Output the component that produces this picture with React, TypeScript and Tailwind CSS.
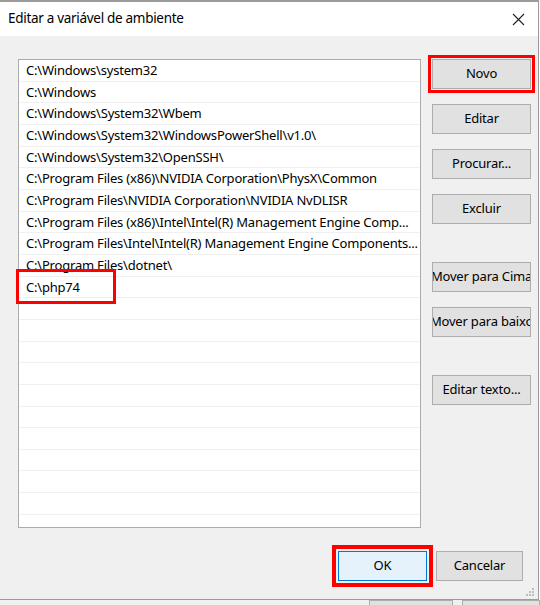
const paths = [
  'C:\\Windows\\system32',
  'C:\\Windows',
  'C:\\Windows\\System32\\Wbem',
  'C:\\Windows\\System32\\WindowsPowerShell\\v1.0\\',
  'C:\\Windows\\System32\\OpenSSH\\',
  'C:\\Program Files (x86)\\NVIDIA Corporation\\PhysX\\Common',
  'C:\\Program Files\\NVIDIA Corporation\\NVIDIA NvDLISR',
  'C:\\Program Files (x86)\\Intel\\Intel(R) Management Engine Comp...',
  'C:\\Program Files\\Intel\\Intel(R) Management Engine Components...',
  'C:\\Program Files\\dotnet\\',
  'C:\\php74',
]

function SideButton({ label, className = '' }: { label: string; className?: string }) {
  return (
    <button
      className={`w-[99px] h-[30px] bg-[#e1e1e1] border border-[#adadad] text-[13px] tracking-[-0.2px] text-black flex items-center justify-center overflow-hidden whitespace-nowrap ${className}`}
    >
      {label}
    </button>
  )
}

export default function App() {
  const rows = [...paths, ...Array(11).fill('')]

  return (
    <div className="relative w-[540px] h-[605px] bg-white overflow-hidden font-['Noto_Sans',sans-serif] text-black">
      {/* janela */}
      <div className="flex flex-col w-[539px] h-[600px] border-t-2 border-r border-b border-[#9b9b9b] bg-[#f0f0f0]">
        <div className="h-[34px] bg-white flex items-center justify-between pl-2 pr-[13px]">
          <span className="text-[13.5px] tracking-[-0.3px] leading-none pb-[1px]">Editar a variável de ambiente</span>
          <svg width="13" height="13" viewBox="0 0 13 13" className="mt-[1px]">
            <path d="M1 1 L12 12 M12 1 L1 12" stroke="#222" strokeWidth="1.1" />
          </svg>
        </div>

        <div className="relative flex-1 flex flex-col">
          <div className="flex pt-[23px] pl-[18px]">
            <div className="w-[403px] h-[469px] bg-white border border-[#acacac] overflow-hidden">
              {rows.map((p, i) => (
                <div
                  key={i}
                  className="h-[21.67px] border-b border-[#f0f0f0] flex items-center pl-[7px] pt-[1px] text-[13px] tracking-[-0.2px] whitespace-nowrap overflow-hidden"
                >
                  {p}
                </div>
              ))}
            </div>

            <div className="ml-[11px] flex flex-col">
              <SideButton label="Novo" className="outline-3 outline-[#ff0000] outline-offset-1" />
              <SideButton label="Editar" className="mt-[15px]" />
              <SideButton label="Procurar..." className="mt-[15px]" />
              <SideButton label="Excluir" className="mt-[15px]" />
              <SideButton label="Mover para Cima" className="mt-[38px]" />
              <SideButton label="Mover para baixo" className="mt-[15px]" />
              <SideButton label="Editar texto..." className="mt-[38px]" />
            </div>
          </div>

          <div className="flex justify-end gap-[9px] pr-[15px] mt-[23px]">
            <button className="w-[89px] h-[30px] bg-[#e5f1fb] border border-[#0078d7] text-[13px] outline-4 outline-[#ff0000] outline-offset-2">
              OK
            </button>
            <button className="w-[87px] h-[30px] bg-[#e1e1e1] border border-[#adadad] text-[13px] tracking-[-0.2px]">
              Cancelar
            </button>
          </div>

          <svg width="10" height="10" viewBox="0 0 10 10" className="absolute right-[3px] bottom-[2px]">
            <rect x="7" y="1" width="2" height="2" fill="#bcbcbc" />
            <rect x="4" y="4" width="2" height="2" fill="#bcbcbc" />
            <rect x="7" y="4" width="2" height="2" fill="#bcbcbc" />
            <rect x="1" y="7" width="2" height="2" fill="#bcbcbc" />
            <rect x="4" y="7" width="2" height="2" fill="#bcbcbc" />
            <rect x="7" y="7" width="2" height="2" fill="#bcbcbc" />
          </svg>
        </div>
      </div>

      {/* janela de trás */}
      <div className="h-[5px] bg-[#f0f0f0] flex">
        <div className="ml-[369px] w-[87px] h-[5px] border border-b-0 border-[#adadad] bg-[#e1e1e1]" />
        <div className="ml-[9px] w-[80px] h-[5px] border border-b-0 border-[#adadad] bg-[#e1e1e1]" />
      </div>

      {/* marcação vermelha */}
      <div className="absolute left-[16px] top-[269px] w-[100px] h-[35px] border-[3px] border-[#ff0000]" />
    </div>
  )
}
